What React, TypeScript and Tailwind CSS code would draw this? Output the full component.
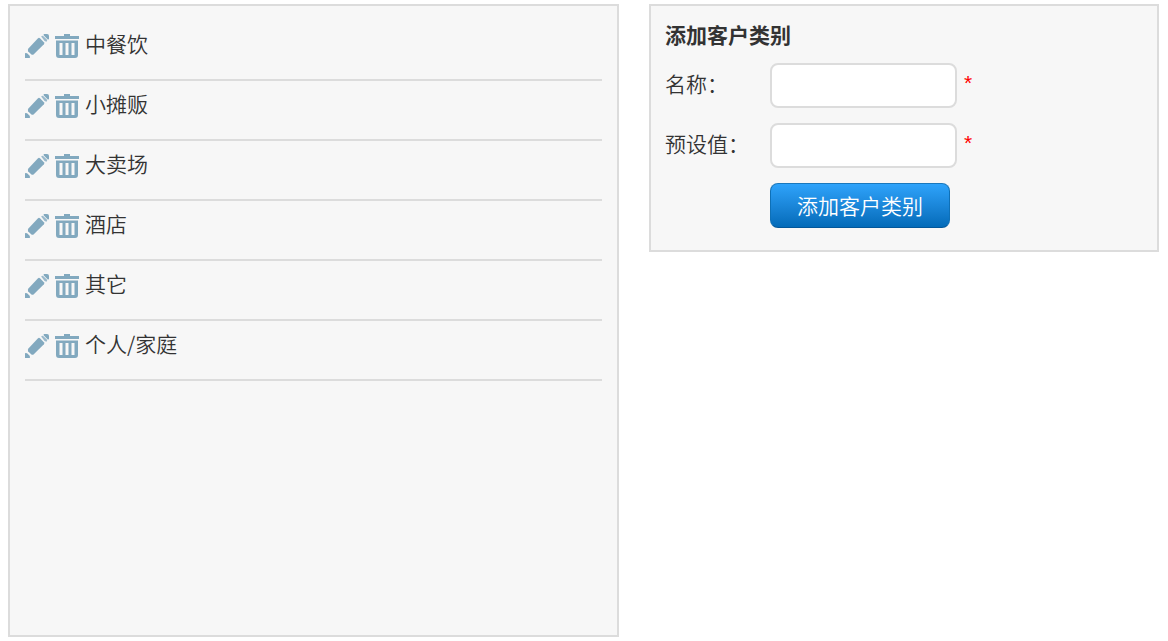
import React from "react";

const categories = ["中餐饮", "小摊贩", "大卖场", "酒店", "其它", "个人/家庭"];

function PencilIcon() {
  return (
    <svg viewBox="0 0 24 24" className="size-6" fill="#82a9bf" aria-hidden="true">
      <path d="M13 4.2Q14 3.4 15 4.3L18.9 8.2Q19.8 9.2 18.9 10.2L8.8 20.3Q7.8 21.2 6.4 20.6L3.2 17.4Q2.4 16 3.4 14.6Z" />
      <path d="M0 24V19.2Q1.4 18.6 2.4 19.6L4.4 21.6Q5.4 22.8 4.8 24Z" />
      <path d="M16.2 2.6Q17 1.2 18.2 2L22 5.8Q22.6 7 21.4 7.8L19.6 7Z" fillOpacity="0.8" />
      <path d="M18.8 0H22Q24 0 24 2V5.2L22.8 5.4 18.6 1.2Z" />
    </svg>
  );
}

function TrashIcon() {
  return (
    <svg viewBox="0 0 24 24" className="size-6" fill="#82a9bf" aria-hidden="true">
      <path d="M9 0H15V2H24V5H0V2H9Z" />
      <path
        fillRule="evenodd"
        d="M1 6.5H23V21Q23 24 20 24H4Q1 24 1 21ZM4.5 9V21H7.5V9ZM10.5 9V21H13.5V9ZM16.5 9V21H19.5V9Z"
      />
    </svg>
  );
}

function CategoryRow({ name }: { name: string }) {
  return (
    <li className="flex h-15 items-center border-b-2 border-[#dcdcdc] pb-2">
      <button type="button" aria-label={`编辑${name}`} className="mr-1.5 cursor-pointer">
        <PencilIcon />
      </button>
      <button type="button" aria-label={`删除${name}`} className="mr-1.5 cursor-pointer">
        <TrashIcon />
      </button>
      <span className="pb-1.5">{name}</span>
    </li>
  );
}

function Field({ id, label }: { id: string; label: string }) {
  return (
    <div className="flex items-center">
      <label htmlFor={id} className="w-[105px] shrink-0 pb-1.5">
        {label}
      </label>
      <input
        id={id}
        type="text"
        required
        className="h-[45px] w-[187px] rounded-lg border-2 border-[#dcdcdc] bg-white px-2 outline-none focus:border-[#82a9bf]"
      />
      <span className="ml-[7px] pb-1.5 font-['Liberation_Sans'] font-normal text-[#f00]">*</span>
    </div>
  );
}

export default function App() {
  return (
    <main className="grid min-h-screen grid-cols-[611fr_510fr] gap-[30px] bg-white pt-1 pr-[9px] pb-1 pl-2 font-['Noto_Sans_CJK_SC',sans-serif] text-[21px] leading-[30px] font-[350] text-[#333]">
      <section className="border-2 border-[#dcdcdc] bg-[#f7f7f7] p-[15px]">
        <ul>
          {categories.map((name) => (
            <CategoryRow key={name} name={name} />
          ))}
        </ul>
      </section>
      <form
        onSubmit={(event) => event.preventDefault()}
        className="flex flex-col gap-[15px] self-start border-2 border-[#dcdcdc] bg-[#f7f7f7] px-3.5 pt-[13px] pb-[22px]"
      >
        <h2 className="-mb-px font-bold">添加客户类别</h2>
        <Field id="category-name" label="名称：" />
        <Field id="category-preset" label="预设值：" />
        <button
          type="submit"
          className="ml-[105px] h-[45px] w-[180px] cursor-pointer rounded-lg border border-t-[#1a78bd] border-r-[#0e70b7] border-b-[#02579a] border-l-[#0e70b7] bg-linear-to-b from-[#2ea3fb] to-[#036bb9] pb-0.5 text-white"
        >
          添加客户类别
        </button>
      </form>
    </main>
  );
}
